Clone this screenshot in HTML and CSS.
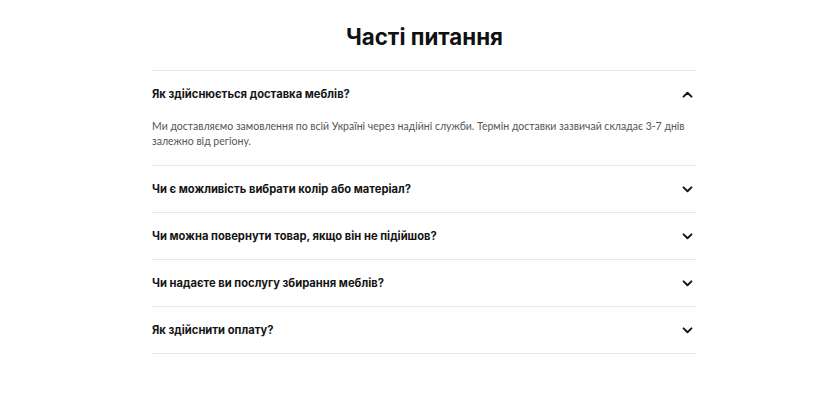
FILE: index.html
```html
<!DOCTYPE html>
<html lang="uk">
<head>
<meta charset="utf-8">
<title>Часті питання</title>
<link rel="stylesheet" href="styles.css">
</head>
<body>
<section class="faq">
  <h2 class="faq-title">Часті питання</h2>
  <div class="faq-list">
    <div class="faq-item open">
      <div class="faq-question">
        <span>Як здійснюється доставка меблів?</span>
        <svg class="chev" viewBox="0 0 12 8" width="11" height="7"><path d="M1.5 6.5 6 2l4.5 4.5" /></svg>
      </div>
      <p class="faq-answer">Ми доставляємо замовлення по всій Україні через надійні служби. Термін доставки зазвичай складає 3-7 днів залежно від регіону.</p>
    </div>
    <div class="faq-item">
      <div class="faq-question">
        <span>Чи є можливість вибрати колір або матеріал?</span>
        <svg class="chev" viewBox="0 0 12 8" width="11" height="7"><path d="M1.5 1.5 6 6l4.5-4.5" /></svg>
      </div>
    </div>
    <div class="faq-item">
      <div class="faq-question">
        <span>Чи можна повернути товар, якщо він не підійшов?</span>
        <svg class="chev" viewBox="0 0 12 8" width="11" height="7"><path d="M1.5 1.5 6 6l4.5-4.5" /></svg>
      </div>
    </div>
    <div class="faq-item">
      <div class="faq-question">
        <span>Чи надаєте ви послугу збирання меблів?</span>
        <svg class="chev" viewBox="0 0 12 8" width="11" height="7"><path d="M1.5 1.5 6 6l4.5-4.5" /></svg>
      </div>
    </div>
    <div class="faq-item">
      <div class="faq-question">
        <span>Як здійснити оплату?</span>
        <svg class="chev" viewBox="0 0 12 8" width="11" height="7"><path d="M1.5 1.5 6 6l4.5-4.5" /></svg>
      </div>
    </div>
  </div>
</section>
</body>
</html>
```

FILE: styles.css
```css
html, body {
  margin: 0;
  padding: 0;
  background: #ffffff;
}

body {
  font-family: "Inter", "Noto Sans", sans-serif;
  color: #111111;
  padding: 22px 0 0 152px;
}

.faq {
  width: 545px;
}

.faq-title {
  margin: 0 0 18px;
  text-align: center;
  font-size: 22.3px;
  line-height: 30px;
  font-weight: 700;
  color: #111111;
}

.faq-list {
  border-top: 1px solid #e9e9e9;
}

.faq-item {
  border-bottom: 1px solid #e9e9e9;
}

.faq-question {
  display: flex;
  align-items: center;
  justify-content: space-between;
  height: 46px;
  padding-right: 4px;
  font-size: 11.2px;
  font-weight: 700;
  color: #151515;
}

.chev {
  fill: none;
  stroke: #151515;
  stroke-width: 2.2;
  stroke-linecap: round;
  stroke-linejoin: round;
}

.faq-answer {
  margin: 0;
  padding: 2px 0 16px;
  font-family: "Lato", "Noto Sans", sans-serif;
  font-size: 10.5px;
  line-height: 15px;
  color: #555555;
}
```
